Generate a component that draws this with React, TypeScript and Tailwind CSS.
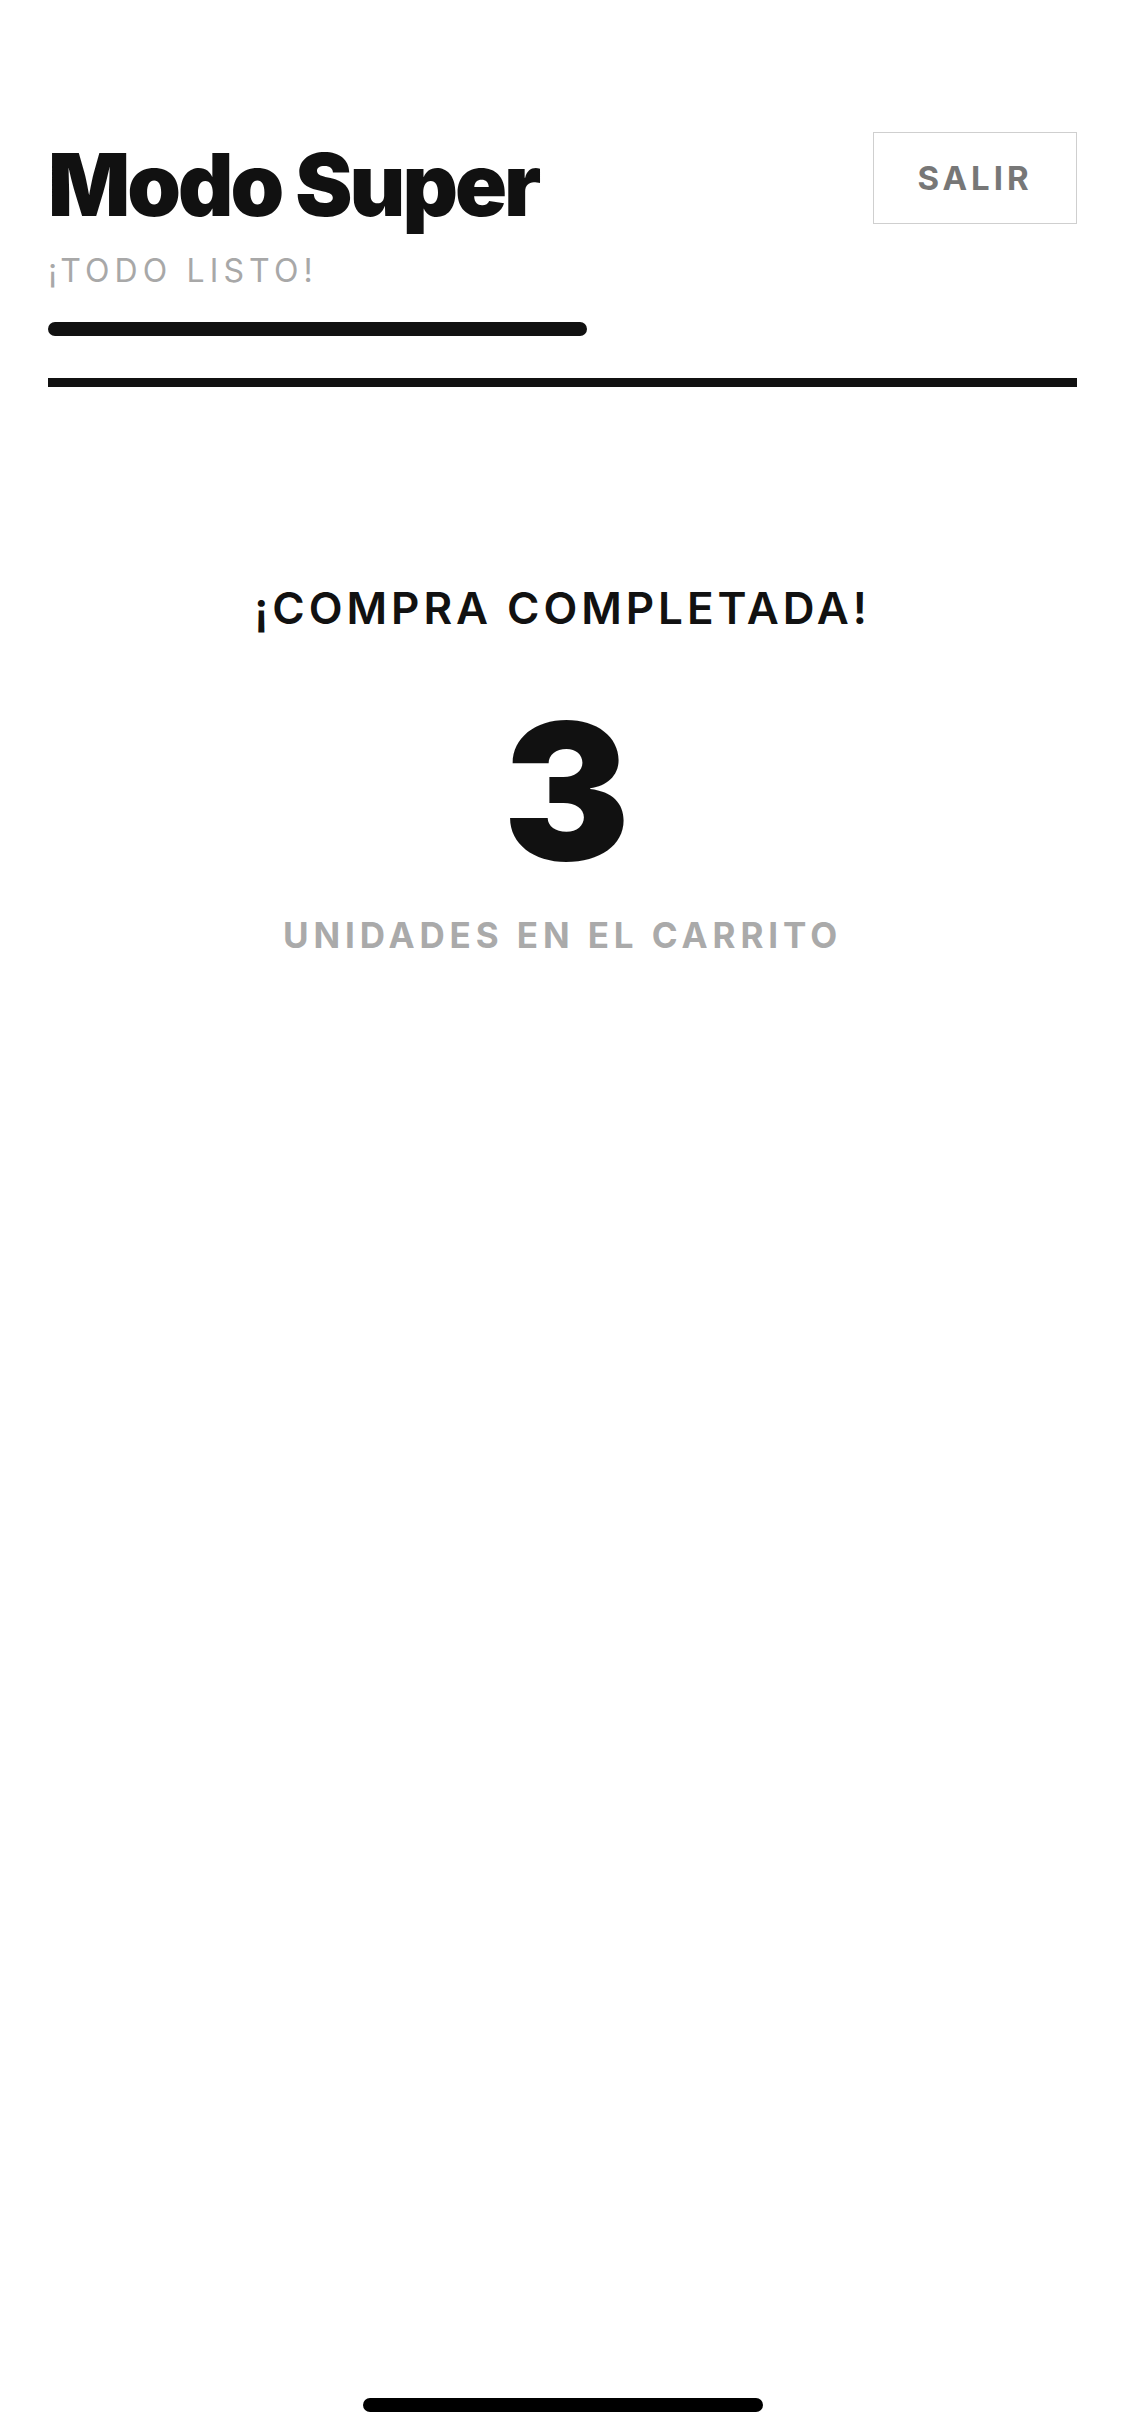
import React from "react";

const font = "font-['Inter','Liberation_Sans',sans-serif]";

function Header() {
  return (
    <div className="flex items-start justify-between">
      <div className="flex flex-col pt-[10px]">
        <h1 className="text-[86px] font-black leading-none tracking-[-0.035em] text-[#111]">Modo Super</h1>
        <p className="mt-[27px] text-[32px] font-normal leading-none tracking-[0.16em] text-[#a8a8a8]">¡TODO LISTO!</p>
        <div className="mt-[35px] h-[14px] w-[539px] rounded-full bg-[#111]" />
      </div>
      <button className="flex h-[92px] w-[204px] items-center justify-center border border-[#cfcfcf] bg-white text-[33px] font-bold leading-none tracking-[0.12em] text-[#777]">
        SALIR
      </button>
    </div>
  );
}

export default function App() {
  return (
    <div className={`${font} flex min-h-[2436px] w-[1125px] flex-col bg-white`}>
      <div className="pl-[48px] pr-[48px] pt-[132px]">
        <Header />
        <div className="mt-[42px] h-[9px] w-full bg-[#111]" />
        <div className="flex flex-col items-center pt-[199px]">
          <h2 className="text-[44px] font-semibold leading-none tracking-[0.09em] text-[#111]">¡COMPRA COMPLETADA!</h2>
          <div className="mt-[66px] pl-[8px] text-[190px] font-black leading-none text-[#111]">3</div>
          <p className="mt-[32px] text-[35px] font-bold leading-none tracking-[0.14em] text-[#aaa]">UNIDADES EN EL CARRITO</p>
        </div>
      </div>
      <div className="mt-auto mb-[24px] flex justify-center">
        <div className="h-[14px] w-[400px] rounded-full bg-black" />
      </div>
    </div>
  );
}
